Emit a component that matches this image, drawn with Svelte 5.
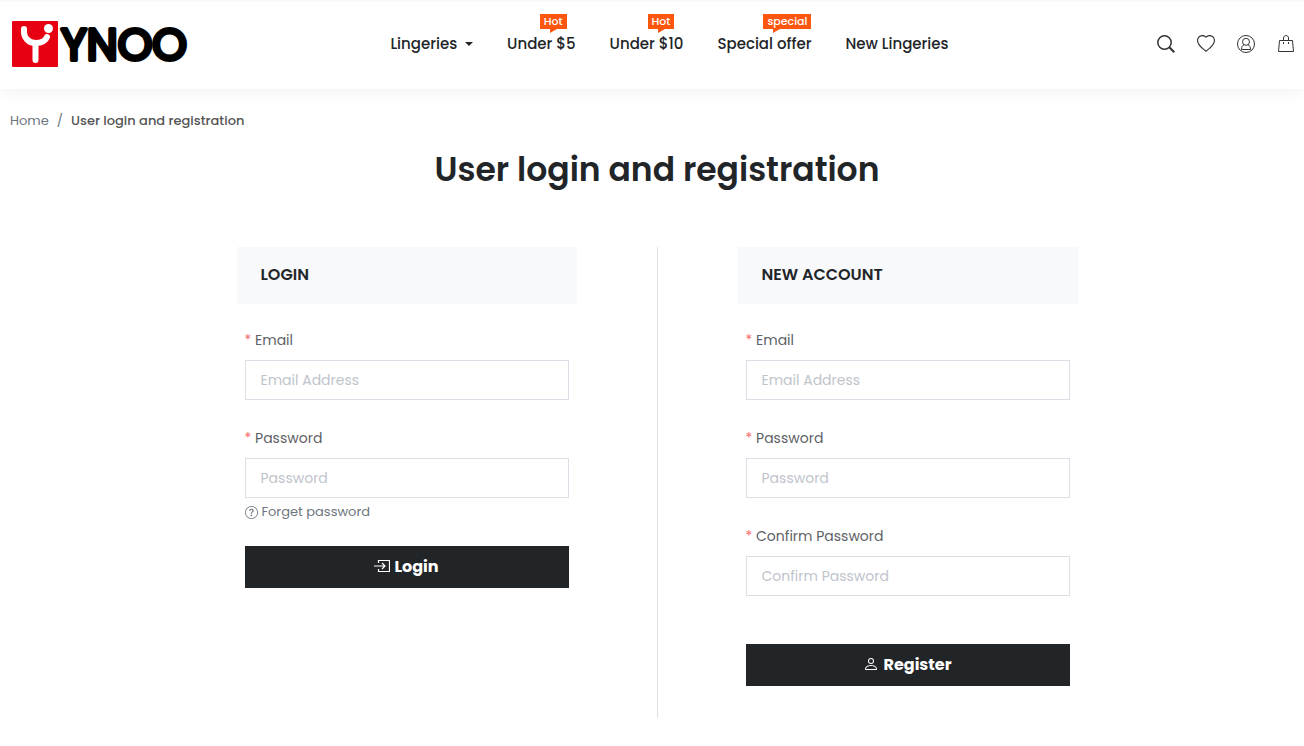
<script>
    const menu = [
        { name: 'Lingeries', dropdown: true },
        { name: 'Under $5', badge: 'Hot' },
        { name: 'Under $10', badge: 'Hot' },
        { name: 'Special offer', badge: 'special' },
        { name: 'New Lingeries' }
    ];

    let login = { email: '', password: '' };
    let register = { email: '', password: '', confirm: '' };
</script>

<header>
    <a class="logo" href="/" aria-label="YNOO">
        <svg width="190" height="80" viewBox="0 -15 190 80">
            <rect x="2" y="2" width="46" height="46" rx="1" fill="#e60012" />
            <g fill="none" stroke="#fff" stroke-width="6" stroke-linecap="round">
                <path d="M14 10V13C14 18 18 24 25.500 24C32 24 35.500 22 37 18" />
                <path d="M25.500 25V41" />
            </g>
            <circle cx="38.500" cy="9.500" r="4.500" fill="#fff" />
            <text class="wordmark" x="51" y="41">YNOO</text>
        </svg>
    </a>

    <nav>
        {#each menu as item}
            <a href="/">
                {item.name}
                {#if item.dropdown}<span class="caret"></span>{/if}
                {#if item.badge}<span class="badge" class:wide={item.badge === 'special'}>{item.badge}</span>{/if}
            </a>
        {/each}
    </nav>

    <div class="tools">
        <button aria-label="Search">
            <svg viewBox="0 0 18 18" class="line">
                <circle cx="7.500" cy="7.500" r="6.700" stroke-width="1.500" />
                <path d="M12.300 12.300L17.300 17.300" stroke-width="2" />
            </svg>
        </button>
        <button aria-label="Wishlist">
            <svg viewBox="0 0 16 16"><path d="m8 2.748-.717-.737C5.600.281 2.514.878 1.400 3.053c-.523 1.023-.641 2.500.314 4.385.920 1.815 2.834 3.989 6.286 6.357 3.452-2.368 5.365-4.542 6.286-6.357.955-1.886.838-3.362.314-4.385C13.486.878 10.400.280 8.717 2.010L8 2.748zM8 15C-7.333 4.868 3.279-3.040 7.824 1.143c.060.055.119.112.176.171a3.120 3.120 0 0 1 .176-.170C12.720-3.042 23.333 4.867 8 15z" /></svg>
        </button>
        <button aria-label="Account">
            <svg viewBox="0 0 18 18" class="line">
                <circle cx="9" cy="9" r="8.500" />
                <circle cx="9" cy="6.800" r="3.500" />
                <path d="M4.500 14.500C4.500 11.800 5.500 10.300 7.200 9.700M10.800 9.700C12.500 10.300 13.500 11.800 13.500 14.500M4.500 14.500H13.500" />
            </svg>
        </button>
        <button aria-label="Cart">
            <svg viewBox="0 0 18 18" class="line">
                <path d="M2.500 5.500H15.500L16.500 16.500H1.500zM6.500 5.500V3C6.500 -.200 11.500 -.200 11.500 3V5.500M6.500 7V9M11.500 7V9" />
            </svg>
        </button>
    </div>
</header>

<main>
    <div class="breadcrumb">
        <a href="/">Home</a>
        <span>/</span>
        <b>User login and registration</b>
    </div>

    <h1>User login and registration</h1>

    <div class="forms">
        <form on:submit|preventDefault>
            <h2>LOGIN</h2>
            <div class="fields">
                <label for="login-email"><i>*</i> Email</label>
                <input id="login-email" type="email" placeholder="Email Address" bind:value={login.email} />
                <label for="login-password"><i>*</i> Password</label>
                <input id="login-password" type="password" placeholder="Password" bind:value={login.password} />
                <div class="below">
                    <a href="/">
                        <svg width="13" height="13" viewBox="0 0 16 16" fill="currentColor">
                            <path d="M8 15A7 7 0 1 1 8 1a7 7 0 0 1 0 14zm0 1A8 8 0 1 0 8 0a8 8 0 0 0 0 16z" />
                            <path d="M5.255 5.786a.237.237 0 0 0 .241.247h.825c.138 0 .248-.113.266-.250.090-.656.540-1.134 1.342-1.134.686 0 1.314.343 1.314 1.168 0 .635-.374.927-.965 1.371-.673.489-1.206 1.060-1.168 1.987l.003.217a.250.250 0 0 0 .250.246h.811a.250.250 0 0 0 .250-.250v-.105c0-.718.273-.927 1.010-1.486.609-.463 1.244-.977 1.244-2.056 0-1.511-1.276-2.241-2.673-2.241-1.267 0-2.655.590-2.750 2.286zm1.557 5.763c0 .533.425.927 1.010.927.609 0 1.028-.394 1.028-.927 0-.552-.420-.940-1.029-.940-.584 0-1.009.388-1.009.940z" />
                        </svg>
                        Forget password
                    </a>
                </div>
                <button class="submit">
                    <svg width="16" height="14" viewBox="0 0 16 14" fill="none" stroke="#fff">
                        <path d="M4.500 4V1.500H15.500V12.500H4.500V10M0 7H10.500M8 4L11 7L8 10" stroke-width="1.200" />
                    </svg>
                    Login
                </button>
            </div>
        </form>

        <div class="divider"></div>

        <form on:submit|preventDefault>
            <h2>NEW ACCOUNT</h2>
            <div class="fields">
                <label for="email"><i>*</i> Email</label>
                <input id="email" type="email" placeholder="Email Address" bind:value={register.email} />
                <label for="password"><i>*</i> Password</label>
                <input id="password" type="password" placeholder="Password" bind:value={register.password} />
                <label for="confirm"><i>*</i> Confirm Password</label>
                <input id="confirm" type="password" placeholder="Confirm Password" bind:value={register.confirm} />
                <div class="below"></div>
                <button class="submit">
                    <svg width="16" height="16" viewBox="0 0 16 16" fill="#fff">
                        <path d="M8 8a3 3 0 1 0 0-6 3 3 0 0 0 0 6zm2-3a2 2 0 1 1-4 0 2 2 0 0 1 4 0zm4 8c0 1-1 1-1 1H3s-1 0-1-1 1-4 6-4 6 3 6 4zm-1-.004c-.001-.246-.154-.986-.832-1.664C11.516 10.680 10.289 10 8 10c-2.290 0-3.516.680-4.168 1.332-.678.678-.830 1.418-.832 1.664h10z" />
                    </svg>
                    Register
                </button>
            </div>
        </form>
    </div>
</main>

<style>
    :global(body) {
        font-family: Poppins, Inter, sans-serif;
        color: #222528;
        background: #fff;
    }

    a {
        color: inherit;
        text-decoration: none;
    }

    header {
        display: flex;
        align-items: center;
        justify-content: space-between;
        height: 84px;
        padding: 0 9px 3px 10px;
        border-top: 2px solid #f9f9f9;
        box-shadow: 0 6px 12px rgba(0, 0, 0, 0.04);
    }

    .logo svg {
        display: block;
    }

    .wordmark {
        font-family: Poppins, Inter, sans-serif;
        font-size: 44px;
        font-weight: 400;
        stroke: #000;
        stroke-width: 4px;
        stroke-linejoin: round;
    }

    nav {
        display: flex;
        gap: 34px;
    }

    nav a {
        position: relative;
        font-size: 15px;
        font-weight: 500;
        line-height: 24px;
    }

    .caret {
        display: inline-block;
        margin-left: 4px;
        vertical-align: 3px;
        border: 4px solid transparent;
        border-top-color: #222528;
        border-bottom: 0;
    }

    .badge {
        position: absolute;
        right: 9px;
        top: -18px;
        padding: 0 4px;
        font-size: 11px;
        font-weight: 500;
        line-height: 15px;
        color: #fff;
        background: #fd560f;
    }

    .badge.wide {
        right: 0;
    }

    .badge::after {
        content: '';
        position: absolute;
        left: 10px;
        top: 15px;
        border-top: 4px solid #fd560f;
        border-right: 7px solid transparent;
    }

    .tools {
        display: flex;
        justify-content: flex-end;
        gap: 22px;
        min-width: 156px;
    }

    button {
        border: 0;
        padding: 0;
        background: none;
        font-family: inherit;
        cursor: pointer;
    }

    .tools svg {
        display: block;
        width: 18px;
        height: 18px;
        fill: #333;
    }

    .tools .line {
        fill: none;
        stroke: #333;
    }

    main {
        padding: 21px 0 28px 10px;
    }

    .breadcrumb {
        display: flex;
        gap: 8px;
        font-size: 13px;
        line-height: 22px;
        color: #6c757d;
    }

    .breadcrumb b {
        font-weight: 500;
        color: #555;
    }

    h1 {
        margin: 16px 0 56px;
        font-size: 33px;
        font-weight: 600;
        line-height: 43px;
        text-align: center;
    }

    .forms {
        display: flex;
        justify-content: center;
        gap: 80px;
    }

    form {
        width: 340px;
        padding-bottom: 32px;
    }

    .divider {
        width: 1px;
        background: #dee2e6;
    }

    h2 {
        margin: 0 0 16px;
        padding: 0 24px 2px;
        font-size: 16px;
        font-weight: 600;
        line-height: 55px;
        background: #f8f9fb;
    }

    .fields {
        padding: 0 8px;
    }

    label {
        display: block;
        font-size: 14px;
        line-height: 40px;
        color: #606266;
    }

    i {
        font-style: normal;
        color: #f56c6c;
    }

    input {
        display: block;
        box-sizing: border-box;
        width: 100%;
        height: 40px;
        padding: 0 15px;
        border: 1px solid #dcdfe6;
        font-family: inherit;
        font-size: 14px;
        color: #606266;
    }

    input::placeholder {
        color: #c0c4cc;
    }

    input + label {
        margin-top: 18px;
    }

    .below {
        height: 48px;
        font-size: 13px;
        line-height: 28px;
        color: #6c757d;
    }

    .below a {
        display: flex;
        align-items: center;
        gap: 4px;
    }

    .submit {
        display: flex;
        align-items: center;
        justify-content: center;
        gap: 4px;
        width: 100%;
        height: 42px;
        padding-bottom: 2px;
        font-size: 16px;
        font-weight: 700;
        color: #fff;
        background: #222528;
    }
</style>
